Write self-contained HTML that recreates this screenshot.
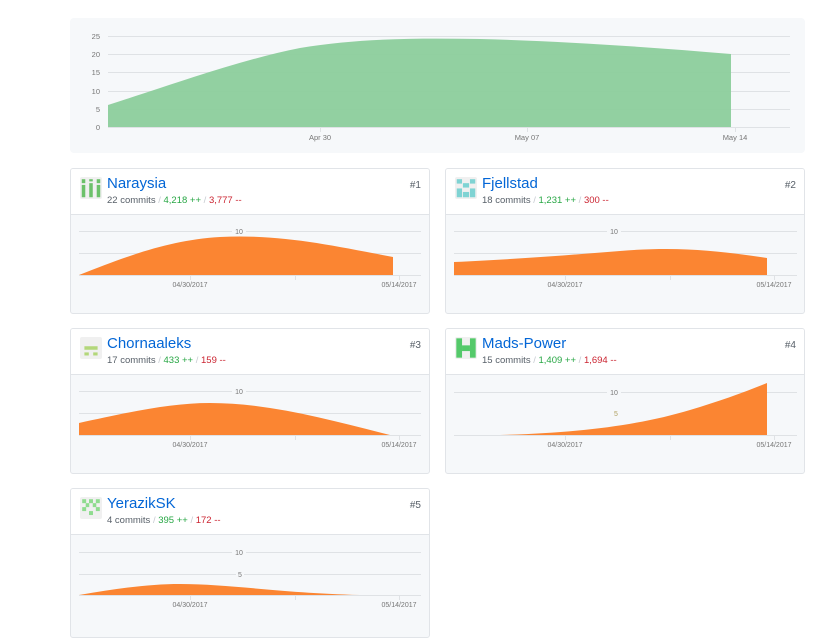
<!DOCTYPE html>
<html><head><meta charset="utf-8"><style>
*{margin:0;padding:0;box-sizing:border-box}
body{width:831px;height:627px;background:#fff;font-family:"Liberation Sans",sans-serif;position:relative;overflow:hidden}
.main{position:absolute;left:70px;top:18px;width:735px;height:135px;background:#f6f8fa;border-radius:4px}
.card{position:absolute;width:360px;height:146px;border:1px solid #e1e4e8;border-radius:3px;background:#f6f8fa;overflow:hidden}
.hd{height:46px;background:#fff;border-bottom:1px solid #e1e4e8;position:relative}
.av{position:absolute;left:9px;top:8px;width:22px;height:22px;background:#f0f0f0;border-radius:2px}
.nm{position:absolute;left:36px;top:6px;font-size:15px;color:#0366d6}
.st{position:absolute;left:36px;top:26px;font-size:9.5px;color:#586069;white-space:nowrap}
.g{color:#28a745}.r{color:#cb2431}.s{color:#c6cbd1}
.rk{position:absolute;right:8px;top:11px;font-size:10px;color:#586069}
svg.ov{position:absolute;left:0;top:0}
</style></head><body>
<div class="main"></div>
<div class="card" style="left:70px;top:168px"><div class="hd"><svg class="av" viewBox="0 0 5 5"><rect x="0.4" y="0.5" width="0.8" height="0.9" fill="#6cc16a"/><rect x="3.8" y="0.5" width="0.8" height="0.9" fill="#6cc16a"/><rect x="2.1" y="0.5" width="0.8" height="0.5" fill="#6cc16a"/><rect x="0.4" y="1.8" width="0.8" height="2.8" fill="#6cc16a"/><rect x="3.8" y="1.8" width="0.8" height="2.8" fill="#6cc16a"/><rect x="2.1" y="1.4" width="0.8" height="3.2" fill="#6cc16a"/></svg><div class="nm">Naraysia</div><div class="st">22 commits <span class="s">/</span> <span class="g">4,218 ++</span> <span class="s">/</span> <span class="r">3,777 --</span></div><div class="rk">#1</div></div></div>
<div class="card" style="left:445px;top:168px"><div class="hd"><svg class="av" viewBox="0 0 5 5"><rect x="0.4" y="0.5" width="1.2" height="1" fill="#7fd3d3"/><rect x="3.4" y="0.5" width="1.2" height="1" fill="#7fd3d3"/><rect x="1.8" y="1.4" width="1.4" height="1" fill="#7fd3d3"/><rect x="0.4" y="2.6" width="1.2" height="2" fill="#7fd3d3"/><rect x="3.4" y="2.6" width="1.2" height="2" fill="#7fd3d3"/><rect x="1.8" y="3.4" width="1.4" height="1.2" fill="#7fd3d3"/></svg><div class="nm">Fjellstad</div><div class="st">18 commits <span class="s">/</span> <span class="g">1,231 ++</span> <span class="s">/</span> <span class="r">300 --</span></div><div class="rk">#2</div></div></div>
<div class="card" style="left:70px;top:328px"><div class="hd"><svg class="av" viewBox="0 0 5 5"><rect x="1" y="2.1" width="3" height="0.8" fill="#b3d77a"/><rect x="1" y="3.5" width="1" height="0.7" fill="#b3d77a"/><rect x="3" y="3.5" width="1" height="0.7" fill="#b3d77a"/></svg><div class="nm">Chornaaleks</div><div class="st">17 commits <span class="s">/</span> <span class="g">433 ++</span> <span class="s">/</span> <span class="r">159 --</span></div><div class="rk">#3</div></div></div>
<div class="card" style="left:445px;top:328px"><div class="hd"><svg class="av" viewBox="0 0 5 5"><rect x="0.3" y="0.3" width="1.3" height="4.4" fill="#54c96a"/><rect x="3.4" y="0.3" width="1.3" height="4.4" fill="#54c96a"/><rect x="1.6" y="1.9" width="1.8" height="1.3" fill="#54c96a"/></svg><div class="nm">Mads-Power</div><div class="st">15 commits <span class="s">/</span> <span class="g">1,409 ++</span> <span class="s">/</span> <span class="r">1,694 --</span></div><div class="rk">#4</div></div></div>
<div class="card" style="left:70px;top:488px;height:150px"><div class="hd"><svg class="av" viewBox="0 0 5 5"><rect x="0.5" y="0.5" width="0.9" height="0.9" fill="#8fdc8f"/><rect x="3.6" y="0.5" width="0.9" height="0.9" fill="#8fdc8f"/><rect x="2.05" y="0.5" width="0.9" height="0.9" fill="#8fdc8f"/><rect x="1.3" y="1.4" width="0.8" height="0.9" fill="#8fdc8f"/><rect x="2.9" y="1.4" width="0.8" height="0.9" fill="#8fdc8f"/><rect x="0.5" y="2.3" width="0.9" height="0.9" fill="#8fdc8f"/><rect x="3.6" y="2.3" width="0.9" height="0.9" fill="#8fdc8f"/><rect x="2.05" y="3.2" width="0.9" height="0.9" fill="#8fdc8f"/></svg><div class="nm">YerazikSK</div><div class="st">4 commits <span class="s">/</span> <span class="g">395 ++</span> <span class="s">/</span> <span class="r">172 --</span></div><div class="rk">#5</div></div></div>

<svg class="ov" width="831" height="627" font-family="Liberation Sans, sans-serif">
<g stroke="#dfe2e5" stroke-width="1">
<line x1="108" y1="36.5" x2="790" y2="36.5"/><line x1="108" y1="54.5" x2="790" y2="54.5"/><line x1="108" y1="72.5" x2="790" y2="72.5"/><line x1="108" y1="91.5" x2="790" y2="91.5"/><line x1="108" y1="109.5" x2="790" y2="109.5"/><line x1="108" y1="127.5" x2="790" y2="127.5"/>
<line x1="320.5" y1="127" x2="320.5" y2="132"/><line x1="527.5" y1="127" x2="527.5" y2="132"/><line x1="735.5" y1="127" x2="735.5" y2="132"/>
</g>
<path d="M108,105 C180,82 240,60 300,48 C360,38 420,38 480,39 C560,41 650,47 731,54 L731,127 L108,127 Z" fill="#8cce9c" opacity="0.95"/>
<g font-size="7.5" fill="#767676" text-anchor="end">
<text x="100" y="39">25</text><text x="100" y="57">20</text><text x="100" y="75">15</text><text x="100" y="94">10</text><text x="100" y="112">5</text><text x="100" y="130">0</text></g>
<g font-size="7.5" fill="#767676" text-anchor="middle"><text x="320" y="140">Apr 30</text><text x="527" y="140">May 07</text><text x="735" y="140">May 14</text></g>

<g id="c1">
<g stroke="#dfe2e5"><line x1="79" y1="231.5" x2="421" y2="231.5"/><line x1="79" y1="253.5" x2="421" y2="253.5"/><line x1="79" y1="275.5" x2="421" y2="275.5"/><line x1="190.5" y1="275" x2="190.5" y2="280"/><line x1="295.5" y1="275" x2="295.5" y2="280"/><line x1="399.5" y1="275" x2="399.5" y2="280"/></g>
<path d="M79,275 C130,255 170,240 220,237 C280,234 330,245 393,257 L393,275 Z" fill="#fb8532"/>
<g font-size="7" fill="#767676" text-anchor="middle"><rect x="232" y="227" width="14" height="8" fill="#f6f8fa"/><text x="239" y="234">10</text><text x="190" y="287">04/30/2017</text><text x="399" y="287">05/14/2017</text></g>
</g>
<g>
<g stroke="#dfe2e5"><line x1="454" y1="231.5" x2="797" y2="231.5"/><line x1="454" y1="253.5" x2="797" y2="253.5"/><line x1="454" y1="275.5" x2="797" y2="275.5"/><line x1="565.5" y1="275" x2="565.5" y2="280"/><line x1="670.5" y1="275" x2="670.5" y2="280"/><line x1="774.5" y1="275" x2="774.5" y2="280"/></g>
<path d="M454,262 C520,259 570,255 620,251 C680,246 720,251 767,258 L767,275 L454,275 Z" fill="#fb8532"/>
<g font-size="7" fill="#767676" text-anchor="middle"><rect x="607" y="227" width="14" height="8" fill="#f6f8fa"/><text x="614" y="234">10</text><text x="565" y="287">04/30/2017</text><text x="774" y="287">05/14/2017</text></g>
</g>
<g>
<g stroke="#dfe2e5"><line x1="79" y1="391.5" x2="421" y2="391.5"/><line x1="79" y1="413.5" x2="421" y2="413.5"/><line x1="79" y1="435.5" x2="421" y2="435.5"/><line x1="190.5" y1="435" x2="190.5" y2="440"/><line x1="295.5" y1="435" x2="295.5" y2="440"/><line x1="399.5" y1="435" x2="399.5" y2="440"/></g>
<path d="M79,423 C130,412 170,403 210,403 C270,403 330,420 390,435 L79,435 Z" fill="#fb8532"/>
<g font-size="7" fill="#767676" text-anchor="middle"><rect x="232" y="387" width="14" height="8" fill="#f6f8fa"/><text x="239" y="394">10</text><text x="190" y="447">04/30/2017</text><text x="399" y="447">05/14/2017</text></g>
</g>
<g>
<g stroke="#dfe2e5"><line x1="454" y1="392.5" x2="797" y2="392.5"/><line x1="454" y1="435.5" x2="797" y2="435.5"/><line x1="565.5" y1="435" x2="565.5" y2="440"/><line x1="670.5" y1="435" x2="670.5" y2="440"/><line x1="774.5" y1="435" x2="774.5" y2="440"/></g>
<path d="M500,435 C580,433 640,425 690,410 C720,401 745,392 767,383 L767,435 Z" fill="#fb8532"/>
<g font-size="7" fill="#767676" text-anchor="middle"><rect x="607" y="388" width="14" height="8" fill="#f6f8fa"/><text x="614" y="395">10</text><text x="616" y="416" fill="#b0a060">5</text><text x="565" y="447">04/30/2017</text><text x="774" y="447">05/14/2017</text></g>
</g>
<g>
<g stroke="#dfe2e5"><line x1="79" y1="552.5" x2="421" y2="552.5"/><line x1="79" y1="574.5" x2="421" y2="574.5"/><line x1="79" y1="595.5" x2="421" y2="595.5"/><line x1="190.5" y1="595" x2="190.5" y2="600"/><line x1="295.5" y1="595" x2="295.5" y2="600"/><line x1="399.5" y1="595" x2="399.5" y2="600"/></g>
<path d="M79,595 C120,588 150,584 180,584 C230,584 280,593 360,595 Z" fill="#fb8532"/>
<g font-size="7" fill="#767676" text-anchor="middle"><rect x="232" y="548" width="14" height="8" fill="#f6f8fa"/><text x="239" y="555">10</text><rect x="236" y="570" width="8" height="8" fill="#f6f8fa"/><text x="240" y="577">5</text><text x="190" y="607">04/30/2017</text><text x="399" y="607">05/14/2017</text></g>
</g>
</svg>
</body></html>
